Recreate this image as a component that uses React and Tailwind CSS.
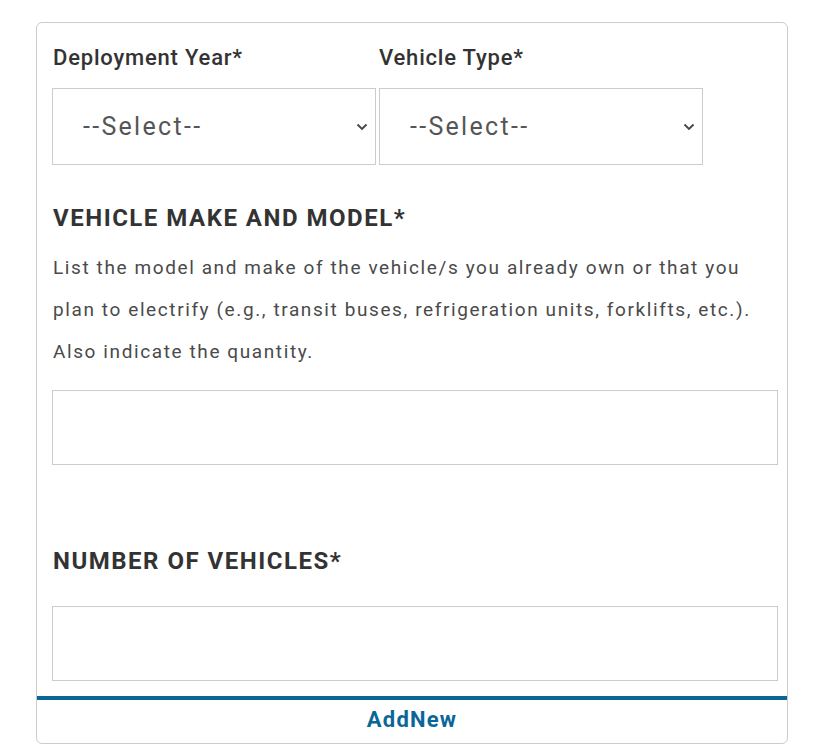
import React from "react";

const font = { fontFamily: "Roboto, 'Liberation Sans', sans-serif" };

function Chevron() {
  return (
    <svg width="12" height="8" viewBox="0 0 12 8" fill="none" className="shrink-0">
      <path d="M1.5 1.5L6 6l4.5-4.5" stroke="#444" strokeWidth="1.8" />
    </svg>
  );
}

function FakeSelect() {
  return (
    <div className="flex h-[77px] w-[324px] items-center justify-between border border-[#cccccc] bg-white pl-[30px] pr-[7px]">
      <span className="text-[25px] tracking-[2.3px] text-[#555555]">--Select--</span>
      <Chevron />
    </div>
  );
}

function App() {
  return (
    <div className="min-h-[755px] bg-white pt-[22px] pl-[36px]" style={font}>
      <div className="w-[752px] rounded-[6px] border border-[#cccccc]">
        <div className="pl-[15px] pr-[9px]">
          <div className="flex gap-[3px] pt-[18px]">
            <div className="flex flex-col">
              <label className="h-[31px] pl-px text-[22px] font-medium tracking-[0.8px] text-[#333333]">Deployment Year*</label>
              <div className="mt-[16px]">
                <FakeSelect />
              </div>
            </div>
            <div className="flex flex-col">
              <label className="h-[31px] text-[22px] font-medium tracking-[0.8px] text-[#333333]">Vehicle Type*</label>
              <div className="mt-[16px]">
                <FakeSelect />
              </div>
            </div>
          </div>

          <h2 className="mt-[38px] pl-px text-[24px] font-bold leading-[30px] tracking-[1.5px] text-[#333333]">
            VEHICLE MAKE AND MODEL*
          </h2>
          <p className="mt-[14px] pl-px text-[19px] leading-[42px] tracking-[1.6px] text-[#4a4a4a]">
            List the model and make of the vehicle/s you already own or that you
            <br />
            plan to electrify (e.g., transit buses, refrigeration units, forklifts, etc.).
            <br />
            Also indicate the quantity.
          </p>
          <input className="mt-[17px] block h-[75px] w-[726px] border border-[#cccccc] bg-white outline-none" />

          <h2 className="mt-[81px] pl-px text-[24px] font-bold leading-[30px] tracking-[1.5px] text-[#333333]">
            NUMBER OF VEHICLES*
          </h2>
          <input className="mt-[30px] block h-[75px] w-[726px] border border-[#cccccc] bg-white outline-none" />
        </div>

        <div className="mt-[15px] h-[4px] bg-[#0b6698]" />
        <div className="flex h-[43px] items-center justify-center pb-[4px]">
          <button className="text-[22px] font-bold tracking-[1.2px] text-[#0b6698]">AddNew</button>
        </div>
      </div>
    </div>
  );
}

export default App;
